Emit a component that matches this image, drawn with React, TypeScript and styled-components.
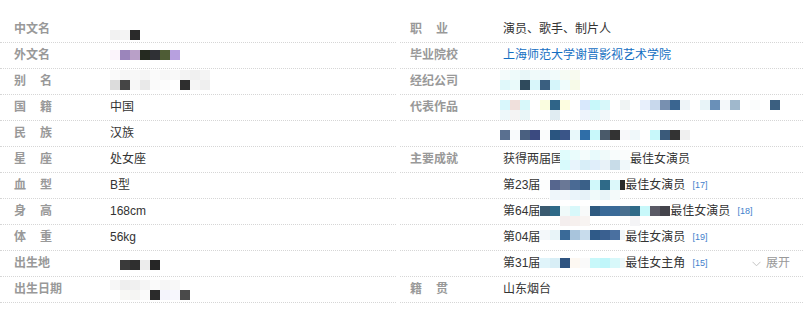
import React from "react";
import styled, { createGlobalStyle } from "styled-components";

const GlobalStyle = createGlobalStyle`
  body {
    margin: 0;
    background: #fff;
  }
`;

const Wrap = styled.div`
  display: flex;
  gap: 4px;
  width: 803px;
  padding-top: 17px;
  font-family: "Liberation Sans", "Noto Sans CJK SC", sans-serif;
  font-size: 12px;
  color: #333;
`;

const Column = styled.dl<{ $width: number }>`
  margin: 0;
  flex: none;
  width: ${(p) => p.$width}px;
`;

const Row = styled.div`
  display: flex;
  height: 26px;
  box-sizing: border-box;
  border-bottom: 1px dotted #d6d6d6;
  line-height: 25px;
`;

const Label = styled.dt<{ $inset: number; $width: number; $spaced?: boolean }>`
  flex: none;
  box-sizing: border-box;
  width: ${(p) => p.$width}px;
  padding-left: ${(p) => p.$inset}px;
  font-weight: bold;
  color: #999;
  white-space: nowrap;
  letter-spacing: ${(p) => (p.$spaced ? "14px" : "0")};
`;

const Value = styled.dd`
  margin: 0;
  flex: 1;
  min-width: 0;
  display: flex;
  align-items: flex-start;
  white-space: nowrap;
`;

const Link = styled.a`
  color: #136ec2;
  text-decoration: none;
`;

const Ref = styled.sup`
  align-self: flex-start;
  margin: 8px 0 0 7px;
  font-size: 9px;
  line-height: 9px;
  color: #3f7fcc;
`;

const Expand = styled.span`
  display: flex;
  align-items: center;
  gap: 5px;
  margin-left: auto;
  margin-right: 13px;
  color: #999;
`;

// pixelated (censored) fragments of the screenshot
const Mosaic = styled.span<{ $top: number; $shift: number; $cols: string }>`
  flex: none;
  display: grid;
  grid-template-columns: ${(p) => p.$cols};
  grid-auto-rows: 10px;
  margin-top: ${(p) => p.$top}px;
  margin-left: ${(p) => p.$shift}px;
`;

const Cell = styled.span<{ $c: string }>`
  background: ${(p) => p.$c || "transparent"};
`;

type PixelsProps = { rows: string[][]; top: number; shift?: number; tail?: number };

const Pixels = ({ rows, top, shift = 0, tail }: PixelsProps) => {
  const n = Math.max(...rows.map((r) => r.length));
  const cols = tail ? `repeat(${n - 1}, 10px) ${tail}px` : `repeat(${n}, 10px)`;
  return (
    <Mosaic $top={top} $shift={shift} $cols={cols}>
      {rows.map((r, i) =>
        Array.from({ length: n }, (_, j) => <Cell key={`${i}-${j}`} $c={r[j] || ""} />)
      )}
    </Mosaic>
  );
};

const Chevron = () => (
  <svg width="9" height="6" viewBox="0 0 9 6">
    <path d="M0.5 0.8 L4.5 4.8 L8.5 0.8" fill="none" stroke="#c4c4c4" strokeWidth="1" />
  </svg>
);

type Item = { label?: string; spaced?: boolean; value: React.ReactNode };

const left: Item[] = [
  {
    label: "中文名",
    value: <Pixels top={13} rows={[["#f2f2f2", "#f4f4f4", "#2a2a2a"]]} />,
  },
  {
    label: "外文名",
    value: (
      <Pixels
        top={7}
        rows={[["#fbf4fb", "#9b85bb", "#b9a0c8", "#252a20", "#2f3035", "#4e5c35", "#b7a0df"]]}
      />
    ),
  },
  {
    label: "别名",
    spaced: true,
    value: (
      <Pixels
        top={1}
        rows={[
          ["#fafafa", "#f6f6f6", "#f8f8f8", "#f5f5f5", "#fafafa", "#f7f7f7", "#f9f9f9", "#f3f3f3", "#f0f0f0", "#f4f4f4"],
          ["#dcdcdc", "#454545", "#f7f7f7", "#e9e9e9", "#fafafa", "#fcfcfc", "", "#2e2e2e", "#f5f5f5", "#efefef"],
        ]}
      />
    ),
  },
  { label: "国籍", spaced: true, value: "中国" },
  { label: "民族", spaced: true, value: "汉族" },
  { label: "星座", spaced: true, value: "处女座" },
  { label: "血型", spaced: true, value: "B型" },
  { label: "身高", spaced: true, value: "168cm" },
  { label: "体重", spaced: true, value: "56kg" },
  {
    label: "出生地",
    value: <Pixels top={9} rows={[["", "#3a3a3a", "#2f2f2f", "#ececec", "#262626"]]} />,
  },
  {
    label: "出生日期",
    value: (
      <Pixels
        top={3}
        rows={[
          ["#f7f7f7", "#eeeeee", "#f0f0f0", "#f5f5f5", "#fafafa", "#f6f6f6", "#f8f8f8", ""],
          ["", "#f8f8f5", "#f5f5f3", "#fafafa", "#2b2b2b", "#f4f4fc", "#f7f7fd", "#4a4a4a"],
        ]}
      />
    ),
  },
];

const right: Item[] = [
  { label: "职业", spaced: true, value: "演员、歌手、制片人" },
  { label: "毕业院校", value: <Link href="#">上海师范大学谢晋影视艺术学院</Link> },
  {
    label: "经纪公司",
    value: (
      <Pixels
        top={1}
        shift={-3}
        rows={[
          ["#f4fbfb", "#eefafa", "#e8f6f8", "#f0fafa", "#eef8fa", "#f2fbfb", "#f6fbf4", "#f8faf0"],
          ["#e0f8fa", "#eafafa", "#2f4a5c", "#d8f6fa", "#3a5f80", "#d5f5fa", "#f0fcfc", "#f7fae8"],
        ]}
      />
    ),
  },
  {
    label: "代表作品",
    value: (
      <Pixels
        top={5}
        shift={-3}
        rows={[
          [
            "#d9f7fc", "#f0e0dc", "#d8f8fa", "#ffffff", "#fafde0", "#2f6488", "#fdfde0", "#ffffff",
            "#d8e8fc", "#c8f8fa", "#d8f8fa", "#ffffff", "#f0f4f4", "#ffffff", "#e8f0fc", "#c8d8ec",
            "#7890b0", "#3a6590", "#eef4f8", "#ffffff", "#e8f4f8", "#6a90b8", "#f4f8fa", "#a0b8cc",
            "#ffffff", "#fafcfc", "#ffffff", "#3b5f80",
          ],
          ["#eef8fa", "#f4f4f4", "#eaf6f8", "", "", "#e0ecf2", "", "", "#eef4fc", "#e8f8fa", "#f2f8fa"],
        ]}
      />
    ),
  },
  {
    value: (
      <Pixels
        top={9}
        shift={-3}
        rows={[
          [
            "#5a7090", "#f8fafc", "#4a6080", "#3b4a80", "#fafcfc", "#2a5580", "#3a5588", "#e8f8fa",
            "#2f6ea8", "#c8f8fa", "#4a5a6a", "#333333", "#f8f8fa", "#f0f8fa", "#ffffff", "#c8f8fa",
            "#3a5a7a", "#333333", "#f0f0f0",
          ],
        ]}
      />
    ),
  },
  {
    label: "主要成就",
    value: (
      <>
        获得两届国
        <Pixels
          top={3}
          shift={-3}
          rows={[
            ["#e0fcfc", "#eafcfc", "#f4fcfc", "#e8fafc", "#f0fafa", "#f8fcfc", "#fafcfc"],
            ["#d8fafc", "#e8f4fc", "#d8eef8", "#e0eefa", "#e8f2f8", "#c8dce8", "#f0f8fa"],
          ]}
        />
        最佳女演员
      </>
    ),
  },
  {
    value: (
      <>
        第23届
        <Pixels
          top={7}
          tail={5}
          rows={[
            ["#fcfdfd", "#56668e", "#6a7896", "#4a6a94", "#3a6088", "#d0f8fa", "#2f6a88", "#dcf8fa", "#2a2a2a"],
            ["", "#eef6fa", "#f2f6fa", "#eaf4fa", "#e6f2f8", "#f0fafa", "#e8f4f8", "#f4fafa", ""],
          ]}
        />
        最佳女演员
        <Ref>[17]</Ref>
      </>
    ),
  },
  {
    value: (
      <>
        第64届
        <Pixels
          top={7}
          rows={[
            [
              "#3a5a70", "#2f6a88", "#f0fafa", "#d8f8fa", "#f8fafa", "#2f5a80", "#3a6a98", "#3a6a98",
              "#4a7090", "#2f6a88", "#c8f8fa", "#5a5a66", "#44444c",
            ],
            ["", "", "#f4eeee", "#f6f0ee", "#f8f4f2", "", "", "", "", "#f4f4f6", "", "", ""],
          ]}
        />
        最佳女演员
        <Ref>[18]</Ref>
      </>
    ),
  },
  {
    value: (
      <>
        第04届
        <Pixels
          top={5}
          tail={5}
          rows={[["#f4f8fa", "#e8f4f8", "#3a6a98", "#a8c4dc", "#c8dcec", "#2f5a88", "#3a6090", "#4a70a0", "#f0f6fa"]]}
        />
        最佳女演员
        <Ref>[19]</Ref>
      </>
    ),
  },
  {
    value: (
      <>
        第31届
        <Pixels
          top={7}
          tail={5}
          rows={[["#e0f4fa", "#d8eef6", "#2f5480", "#fdf8f2", "#fafafa", "#c8f8fa", "#c0f6fa", "#d8f8fa", "#eef8fa"]]}
        />
        最佳女主角
        <Ref>[15]</Ref>
        <Expand>
          <Chevron />
          展开
        </Expand>
      </>
    ),
  },
  { label: "籍贯", spaced: true, value: "山东烟台" },
];

const InfoColumn = ({ items, width, inset, labelWidth }: { items: Item[]; width: number; inset: number; labelWidth: number }) => (
  <Column $width={width}>
    {items.map((it, i) => (
      <Row key={i}>
        <Label $inset={inset} $width={labelWidth} $spaced={it.spaced}>
          {it.label ?? ""}
        </Label>
        <Value>{it.value}</Value>
      </Row>
    ))}
  </Column>
);

export default function App() {
  return (
    <>
      <GlobalStyle />
      <Wrap>
        <InfoColumn items={left} width={396} inset={14} labelWidth={110} />
        <InfoColumn items={right} width={403} inset={10} labelWidth={103} />
      </Wrap>
    </>
  );
}
